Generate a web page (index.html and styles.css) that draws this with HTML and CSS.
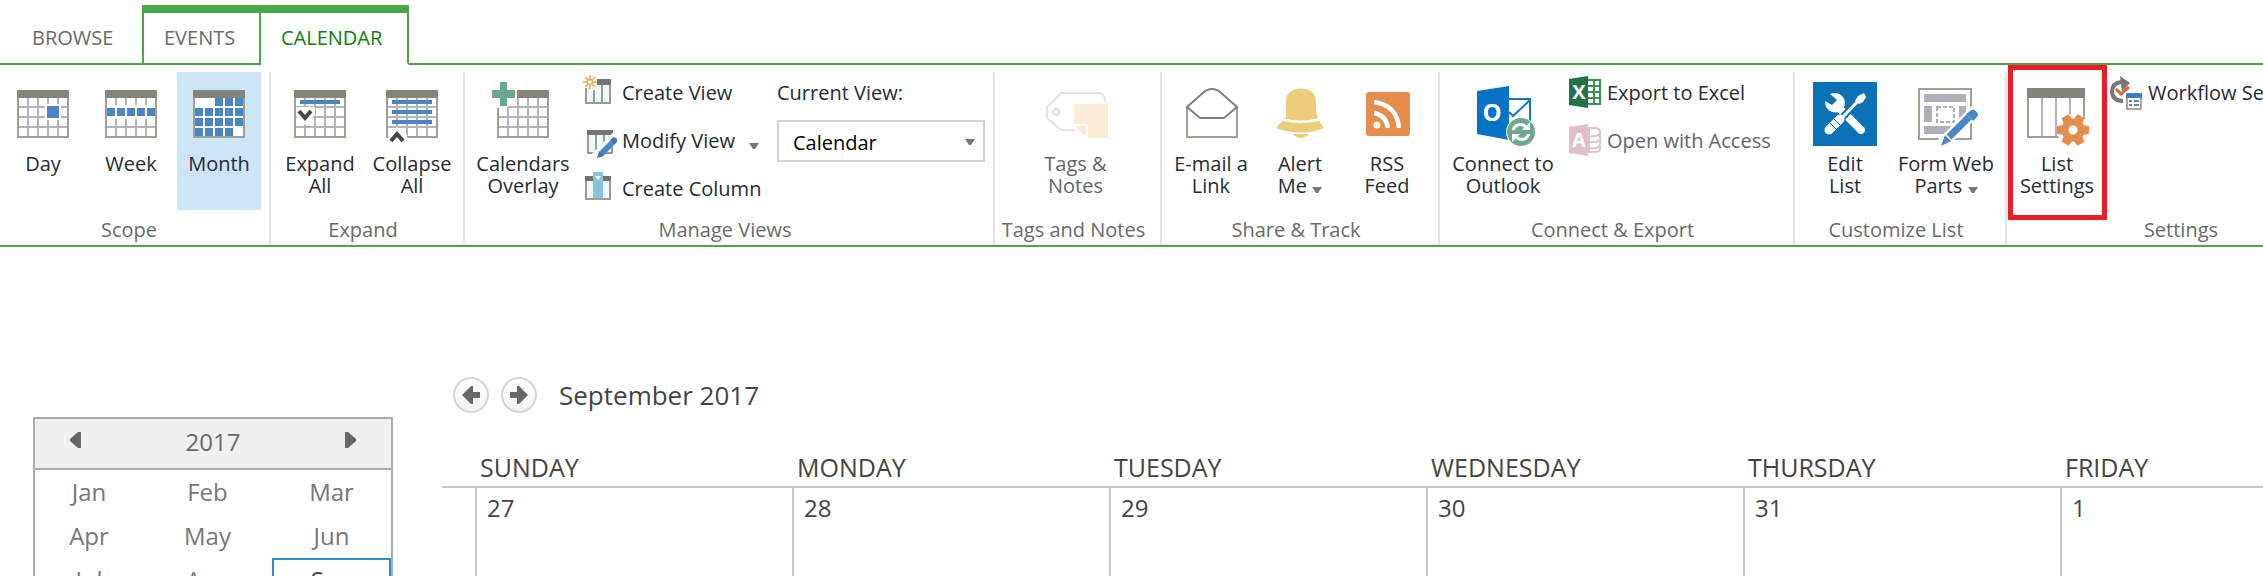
FILE: index.html
```html
<!DOCTYPE html>
<html lang="en">
<head>
<meta charset="utf-8">
<title>Calendar</title>
<link rel="stylesheet" href="styles.css">
</head>
<body>
<svg class="sprite" aria-hidden="true">
  <symbol id="cal" viewBox="0 0 64 64">
    <rect x="7" y="9" width="50" height="46" fill="#fff" stroke="#a0a195" stroke-width="2"/>
    <path d="M17 16V54M27 16V54M37 16V54M47 16V54M8 25H56M8 35H56M8 45H56" stroke="#b5b2bd" stroke-width="2"/>
    <rect x="6" y="8" width="52" height="8" fill="#84857a"/>
  </symbol>
  <symbol id="caret" viewBox="0 0 10 6"><path d="M0 0H10L6 6H4Z" fill="#777"/></symbol>
</svg>

<nav class="tabs">
  <a class="tab" href="#browse">BROWSE</a>
  <div class="tab-set">
    <a class="tab tab-events" href="#events">EVENTS</a>
    <a class="tab tab-active" href="#calendar">CALENDAR</a>
  </div>
  <div class="tabs-rest"></div>
</nav>

<div class="ribbon">
  <section class="group">
    <div class="tools">
      <button class="big w84"><svg class="icon" viewBox="0 0 64 64"><use href="#cal"/><rect x="34" y="22" width="16" height="16" fill="#fff"/><rect x="36" y="24" width="12" height="12" fill="#4a86c5"/></svg><span>Day</span></button>
      <button class="big w84"><svg class="icon" viewBox="0 0 64 64"><use href="#cal"/><path d="M8 30H56" stroke="#fff" stroke-width="13"/><path d="M8 30H56" stroke="#4a86c5" stroke-width="8" stroke-dasharray="8 2"/></svg><span>Week</span></button>
      <button class="big w84 pressed"><svg class="icon" viewBox="0 0 64 64"><rect x="7" y="9" width="50" height="46" fill="#fff" stroke="#a0a195" stroke-width="2"/><rect x="6" y="8" width="52" height="8" fill="#84857a"/><path d="M28 20H56M8 30H56M8 40H56M8 50H46" stroke="#4a86c5" stroke-width="8" stroke-dasharray="8 2"/></svg><span>Month</span></button>
    </div>
    <h2 class="label">Scope</h2>
  </section>

  <section class="group">
    <div class="tools">
      <button class="big w90"><svg class="icon" viewBox="0 0 64 64"><use href="#cal"/><path d="M12 20H52" stroke="#4a86c5" stroke-width="4"/><path d="M8 25H27V33L17 43L8 34Z" fill="#fff"/><path d="M11 29L17 36L23 29" fill="none" stroke="#444540" stroke-width="4"/></svg><span>Expand<br>All</span></button>
      <button class="big w86"><svg class="icon" viewBox="0 0 64 64"><use href="#cal"/><path d="M12 20H52M12 30H52M12 40H52" stroke="#4a86c5" stroke-width="4"/><path d="M8 53L17 45L27 53V60H8Z" fill="#fff"/><path d="M11 59L17 52L23 59" fill="none" stroke="#444540" stroke-width="4"/></svg><span>Collapse<br>All</span></button>
    </div>
    <h2 class="label">Expand</h2>
  </section>

  <section class="group">
    <div class="tools">
      <button class="big w108"><svg class="icon" viewBox="0 0 64 64"><path d="M7 26V55H57V16" fill="none" stroke="#a0a195" stroke-width="2"/><path d="M17 25V54M27 16V54M37 16V54M47 16V54M17 25H56M8 35H56M8 45H56" stroke="#b5b2bd" stroke-width="2"/><rect x="26" y="8" width="32" height="8" fill="#84857a"/><path d="M9 0H16V8H24V16H16V24H9V16H1V8H9Z" fill="#6ba88d"/></svg><span>Calendars<br>Overlay</span></button>
      <div class="stack stack-views">
        <button class="small"><svg class="icon-s" viewBox="0 0 32 32"><path d="M2 12V27H26V9" fill="#eef8f8" stroke="#9b9b9b" stroke-width="2"/><path d="M10 14V26M18 9V26" stroke="#9b9b9b" stroke-width="2"/><rect x="13" y="3" width="14" height="6" fill="#737373"/><circle cx="6" cy="6" r="7" fill="#fff"/><path d="M6 -1V13M-1 6H13M1 1L11 11M11 1L1 11" stroke="#eebc80" stroke-width="2"/><circle cx="6" cy="6" r="2.500" fill="#fff" stroke="#e9ac67" stroke-width="1.500"/></svg><span>Create View</span></button>
        <button class="small"><svg class="icon-s" viewBox="0 0 32 32"><rect x="4" y="8" width="24" height="21" fill="#eef8f8" stroke="#9b9b9b" stroke-width="2"/><path d="M12 11V28M20 11V28" stroke="#9b9b9b" stroke-width="2"/><rect x="3" y="6" width="26" height="5" fill="#737373"/><path d="M34 10L12 32L12 36" fill="none" stroke="#fff" stroke-width="9"/><path d="M28 19L17 30" stroke="#4a86c5" stroke-width="6"/><path d="M28 14Q31 12 33 15V18L30 21L26 17ZM15 27L20 32L13 34Z" fill="#3f77b5"/></svg><span>Modify View</span><svg class="caret" viewBox="0 0 10 6"><use href="#caret"/></svg></button>
        <button class="small"><svg class="icon-s" viewBox="0 0 32 32"><rect x="2" y="6" width="24" height="21" fill="#eef8f8" stroke="#9b9b9b" stroke-width="2"/><rect x="1" y="4" width="26" height="5" fill="#737373"/><rect x="9" y="0" width="10" height="26" fill="#87c5df"/><path d="M11 4H17L14 8Z" fill="#fff"/></svg><span>Create Column</span></button>
      </div>
      <div class="current">
        <label for="view">Current View:</label>
        <div class="select-box">
          <select id="view"><option>Calendar</option></select>
          <svg class="caret select-caret" viewBox="0 0 10 6"><use href="#caret"/></svg>
        </div>
      </div>
    </div>
    <h2 class="label">Manage Views</h2>
  </section>

  <section class="group">
    <div class="tools">
      <button class="big w153" disabled><svg class="icon" viewBox="0 0 64 64"><path d="M30 48H17L3 36V25L17 11H55Q61 12 61 20" fill="none" stroke="#e3e3e3" stroke-width="2"/><circle cx="12" cy="30" r="3" fill="none" stroke="#e3e3e3" stroke-width="2"/><path d="M30 22H64V56H44V42H30Z" fill="#faecd6"/><path d="M31 44H42V55Z" fill="#faecd6"/></svg><span>Tags &amp;<br>Notes</span></button>
    </div>
    <h2 class="label">Tags and Notes</h2>
  </section>

  <section class="group">
    <div class="tools">
      <button class="big w90"><svg class="icon" viewBox="0 0 64 64"><path d="M8 25V55H58V25" fill="#fff" stroke="#a0a195" stroke-width="2"/><path d="M8 25L26 9Q33 5 40 9L58 25L45 36H21Z" fill="#fff" stroke="#7c8080" stroke-width="2"/></svg><span>E-mail a<br>Link</span></button>
      <button class="big w80"><svg class="icon" viewBox="0 0 64 64"><path d="M18 35V20Q18 11 25 8Q33 5 41 8Q48 11 48 20V30L50 36Q33 41 15 36Z" fill="#edcd7c"/><path d="M14 39Q33 43 51 39L56 46Q33 55 8 46Z" fill="#edcd7c"/><path d="M25 52H41Q38 56 33 56Q28 56 25 52Z" fill="#edcd7c"/></svg><span>Alert<br>Me <svg class="caret" viewBox="0 0 10 6"><use href="#caret"/></svg></span></button>
      <button class="big w86"><svg class="icon" viewBox="0 0 64 64"><rect x="11" y="10" width="44" height="44" rx="3" fill="#e58d4b"/><circle cx="22" cy="43" r="3.500" fill="#fff"/><path d="M19 31Q31 33 33 46M19 20Q42 23 44 46" fill="none" stroke="#fff" stroke-width="4.500"/></svg><span>RSS<br>Feed</span></button>
    </div>
    <h2 class="label">Share &amp; Track</h2>
  </section>

  <section class="group">
    <div class="tools">
      <button class="big w118"><svg class="icon" viewBox="0 0 64 64"><rect x="34" y="17" width="25" height="28" fill="#fff" stroke="#1474c8" stroke-width="2"/><path d="M38 30L42 34L59 18" fill="none" stroke="#1474c8" stroke-width="2"/><path d="M6 9L38 4V58L6 52Z" fill="#0772c6"/><text x="21" y="39" class="logo logo-o">O</text><circle cx="50" cy="50" r="15" fill="#fff"/><circle cx="50" cy="50" r="14" fill="#6ba88d"/><path d="M42 48Q45 41 52 43L55 45M58 52Q55 59 48 57L45 55" fill="none" stroke="#fff" stroke-width="3"/><path d="M59 40V48H51ZM41 60V52H49Z" fill="#fff"/></svg><span>Connect to<br>Outlook</span></button>
      <div class="stack stack-export">
        <button class="small"><svg class="icon-s" viewBox="0 0 32 32"><rect x="18" y="4" width="13" height="24" fill="#fff" stroke="#3a9251" stroke-width="2"/><path d="M19 10H31M19 16H31M19 22H31M25 4V28" stroke="#3a9251" stroke-width="2"/><path d="M0 3L19 0V32L0 29Z" fill="#217346"/><text x="10" y="23" class="logo">X</text></svg><span>Export to Excel</span></button>
        <button class="small" disabled><svg class="icon-s" viewBox="0 0 32 32"><path d="M20 4H26Q31 4 31 8V25Q31 28 26 28H20ZM20 12Q30 13 31 9M20 18Q30 19 31 15M20 24Q30 25 31 21" fill="#fff" stroke="#e2c3cd" stroke-width="2"/><path d="M0 3L19 0V32L0 29Z" fill="#e0bfca"/><text x="10" y="23" class="logo">A</text></svg><span>Open with Access</span></button>
      </div>
    </div>
    <h2 class="label">Connect &amp; Export</h2>
  </section>

  <section class="group">
    <div class="tools">
      <button class="big w92"><svg class="icon" viewBox="0 0 64 64"><rect width="64" height="64" fill="#0b72b8"/><path d="M25 25L48 48" stroke="#fff" stroke-width="8" stroke-linecap="round"/><path d="M17 12Q25 9 30 15Q34 21 30 27Q25 33 17 29Q12 26 12 19L19 23L24 18Z" fill="#fff"/><path d="M46 18L28 37" stroke="#0b72b8" stroke-width="7"/><path d="M47 17L27 38" stroke="#fff" stroke-width="3"/><path d="M42 19L45 14L51 11L53 15L50 20L46 22Z" fill="#fff"/><path d="M27 37L16 48" stroke="#fff" stroke-width="9" stroke-linecap="round"/><path d="M20 36L28 44M16 40L24 48" stroke="#0b72b8" stroke-width="1"/></svg><span>Edit<br>List</span></button>
      <button class="big w102"><svg class="icon" viewBox="0 0 64 64"><rect x="5" y="7" width="52" height="50" fill="#fff" stroke="#a0a195" stroke-width="2"/><path d="M10 12H52V20H10ZM10 24H18V40H10ZM45 24H52V40H45ZM10 44H37V52H10Z" fill="#b0aebb"/><rect x="23" y="25" width="17" height="15" fill="none" stroke="#b0aebb" stroke-width="2" stroke-dasharray="4 2"/><path d="M64 26L26 64" stroke="#fff" stroke-width="12"/><path d="M55 35L35 55" stroke="#4a86c5" stroke-width="7"/><path d="M55 30Q58 26 62 29Q66 33 62 36L59 39L52 32ZM31 53L37 59L27 64Z" fill="#4a86c5"/></svg><span>Form Web<br>Parts <svg class="caret" viewBox="0 0 10 6"><use href="#caret"/></svg></span></button>
    </div>
    <h2 class="label">Customize List</h2>
  </section>

  <section class="group">
    <div class="tools">
      <button class="big w92 marked"><svg class="icon" viewBox="0 0 64 64"><rect x="3" y="7" width="56" height="48" fill="#fff" stroke="#a0a195" stroke-width="2"/><path d="M17 16V54M31 16V54M45 16V54" stroke="#b5b2bd" stroke-width="2"/><rect x="2" y="6" width="58" height="10" fill="#84857a"/><circle cx="48" cy="48" r="16" fill="#fff"/><circle cx="48" cy="48" r="8" fill="none" stroke="#e58d4b" stroke-width="7"/><g fill="#e58d4b"><path id="tooth" d="M39 43L32 44V52L39 53ZM57 43L64 44V52L57 53Z"/><use href="#tooth" transform="rotate(60 48 48)"/><use href="#tooth" transform="rotate(120 48 48)"/></g></svg><span>List<br>Settings</span></button>
      <div class="stack stack-settings">
        <button class="small"><svg class="icon-s" viewBox="0 0 32 32"><path d="M13 25Q3 25 2 16Q2 7 11 6H14" fill="none" stroke="#777" stroke-width="4"/><path d="M10 0L20 7L12 15Z" fill="#777"/><path d="M6 13L11 18L19 11" fill="none" stroke="#e56035" stroke-width="3"/><rect x="17" y="18" width="14" height="15" fill="#fff" stroke="#888" stroke-width="1.500"/><rect x="16" y="17" width="16" height="5" fill="#3f7fca"/><path d="M19 25H22M24 25H29M19 29H22M24 29H29" stroke="#6a86b0" stroke-width="2"/></svg><span>Workflow Settings</span></button>
      </div>
    </div>
    <h2 class="label">Settings</h2>
  </section>
</div>

<div class="page">
  <aside class="picker">
    <div class="picker-head">
      <button class="step" aria-label="Previous year"><svg width="12" height="16" viewBox="0 0 12 16"><path d="M11 0V16H8L0 9V7L8 0Z" fill="#666"/></svg></button>
      <span>2017</span>
      <button class="step" aria-label="Next year"><svg width="12" height="16" viewBox="0 0 12 16"><path d="M1 0V16H4L12 9V7L4 0Z" fill="#666"/></svg></button>
    </div>
    <div class="months">
      <button>Jan</button><button>Feb</button><button>Mar</button>
      <button>Apr</button><button>May</button><button>Jun</button>
      <button>Jul</button><button>Aug</button><button class="chosen">Sep</button>
    </div>
  </aside>

  <main class="calendar">
    <header class="cal-head">
      <button class="round" aria-label="Previous month"><svg width="20" height="20" viewBox="0 0 20 20"><path d="M1 10L10 1H12V7H19V13H12V19H10Z" fill="#66686a"/></svg></button>
      <button class="round" aria-label="Next month"><svg width="20" height="20" viewBox="0 0 20 20"><path d="M19 10L10 1H8V7H1V13H8V19H10Z" fill="#66686a"/></svg></button>
      <h1>September 2017</h1>
    </header>
    <table class="grid">
      <thead><tr><td class="gutter"></td><th>SUNDAY</th><th>MONDAY</th><th>TUESDAY</th><th>WEDNESDAY</th><th>THURSDAY</th><th class="rest">FRIDAY</th></tr></thead>
      <tbody><tr><td></td><td>27</td><td>28</td><td>29</td><td>30</td><td>31</td><td>1</td></tr></tbody>
    </table>
  </main>
</div>
</body>
</html>
```

FILE: styles.css
```css
* { box-sizing: border-box; }

html { overflow: hidden; }

body {
  margin: 0;
  background: #fff;
  color: #262b33;
  font: 20px/22px "Open Sans", "Noto Sans", sans-serif;
  overflow: hidden;
}

button, select { font: inherit; color: inherit; }

button {
  margin: 0;
  padding: 0;
  border: 0;
  background: none;
}

button:disabled { color: #5f6571; }

h1, h2 { margin: 0; font-weight: 400; }

.sprite { position: absolute; width: 0; height: 0; }

/* Tabs */
.tabs {
  display: flex;
  align-items: stretch;
  height: 65px;
  padding-top: 5px;
}

.tab {
  display: block;
  padding: 22px 26px 0 32px;
  border-bottom: 2px solid #4aa64a;
  color: #6a6a6a;
  text-decoration: none;
  white-space: nowrap;
}

.tabs > .tab { width: 142px; }

.tab-set {
  display: flex;
  border-top: 8px solid #4aa64a;
}

.tab-set .tab { padding: 14px 0 0 20px; }

.tab-events {
  width: 119px;
  border-right: 2px solid #4aa64a;
  border-left: 2px solid #4aa64a;
}

.tab-set .tab-active {
  width: 148px;
  border-right: 2px solid #4aa64a;
  border-bottom-color: #fff;
  color: #107c10;
}

.tabs-rest { flex: 1; border-bottom: 2px solid #4aa64a; }

/* Ribbon */
.ribbon {
  display: flex;
  padding-top: 7px;
  border-bottom: 2px solid #4aa64a;
  overflow: hidden;
}

.group {
  flex: none;
  padding: 0 8px 0 4px;
  border-right: 2px solid #e4e4e4;
}

.group:first-child { padding-left: 1px; }

.tools { display: flex; gap: 4px; height: 138px; }

.label {
  padding: 4px 4px 0 0;
  color: #6a6a6a;
  font-size: 20px;
  line-height: 31px;
  text-align: center;
}

.big {
  position: relative;
  display: flex;
  flex-direction: column;
  align-items: center;
  justify-content: flex-start;
  gap: 7px;
  height: 138px;
  padding-top: 10px;
  text-align: center;
  white-space: nowrap;
}

.icon { flex: none; width: 64px; height: 64px; }

.w80 { width: 80px; }
.w84 { width: 84px; }
.w86 { width: 86px; }
.w90 { width: 90px; }
.w92 { width: 92px; }
.w102 { width: 102px; }
.w108 { width: 108px; }
.w118 { width: 118px; }
.w153 { width: 153px; }

.pressed { background: #cde5f7; }

.marked::after {
  content: "";
  position: absolute;
  inset: -7px -4px -10px -3px;
  border: 5px solid #ee1c25;
}

.stack { padding: 4px 0 0 3px; }
.stack-views { width: 192px; }
.stack-export { width: 219px; }
.stack-settings { width: 248px; }

.small {
  display: flex;
  align-items: flex-start;
  gap: 6px;
  height: 48px;
  white-space: nowrap;
}

.small span { line-height: 34px; }

.icon-s { width: 32px; height: 32px; overflow: visible; }

.caret { width: 10px; height: 6px; }
.small .caret { margin: 19px 0 0 8px; }

.current {
  width: 208px;
  padding-top: 9px;
}

.current label { display: block; line-height: 24px; }

.select-box { position: relative; margin-top: 15px; }

.select-box select {
  width: 100%;
  height: 42px;
  padding: 4px 14px 0;
  border: 2px solid #d0d4d9;
  border-radius: 0;
  background: #fff;
  color: #000;
  appearance: none;
}

.select-caret { position: absolute; top: 19px; right: 10px; }

.logo {
  fill: #fff;
  font-size: 20px;
  font-weight: 700;
  text-anchor: middle;
}

.logo-o { font-size: 24px; }

/* Page body */
.page {
  display: grid;
  grid-template-columns: 360px 1fr;
  gap: 49px;
  padding: 130px 0 0 33px;
  font-size: 24px;
}

.picker {
  align-self: start;
  margin-top: 40px;
  border: 2px solid #ababab;
  color: #6a6a6a;
}

.picker-head {
  display: flex;
  align-items: center;
  justify-content: space-between;
  height: 51px;
  padding: 0 35px;
  border-bottom: 2px solid #ababab;
  background: #f0f0f0;
}

.picker-head span { padding-bottom: 4px; }

.step { display: flex; padding-bottom: 8px; }

.months {
  display: grid;
  grid-template-columns: 108fr 129fr 119fr;
  grid-auto-rows: 44px;
  color: #777;
}

.months .chosen { border: 2px solid #2a8dd4; color: #444; }

.calendar { min-width: 0; color: #444; }

.cal-head {
  display: flex;
  align-items: center;
  gap: 12px;
  padding-left: 11px;
}

.cal-head h1 { padding-left: 10px; font-size: 26px; line-height: 36px; }

.round {
  display: grid;
  place-items: center;
  width: 36px;
  height: 36px;
  border: 2px solid #d6d6d6;
  border-radius: 50%;
  background: linear-gradient(#fff, #f2f2f2);
}

.grid {
  width: 100%;
  margin-top: 35px;
  border-collapse: separate;
  border-spacing: 0;
  table-layout: fixed;
}

.grid th {
  width: 317px;
  padding: 4px 0 4px 5px;
  font-size: 25px;
  font-weight: 400;
  line-height: 30px;
  text-align: left;
}

.grid th.rest { width: auto; }
.grid .gutter { width: 33px; }

.grid thead th, .grid thead td { border-bottom: 2px solid #c6c6c6; }

.grid tbody td {
  height: 88px;
  padding: 5px 0 0 10px;
  border-left: 2px solid #c6c6c6;
  line-height: 30px;
  vertical-align: top;
}

.grid tbody td:first-child { border-left: 0; }
```
